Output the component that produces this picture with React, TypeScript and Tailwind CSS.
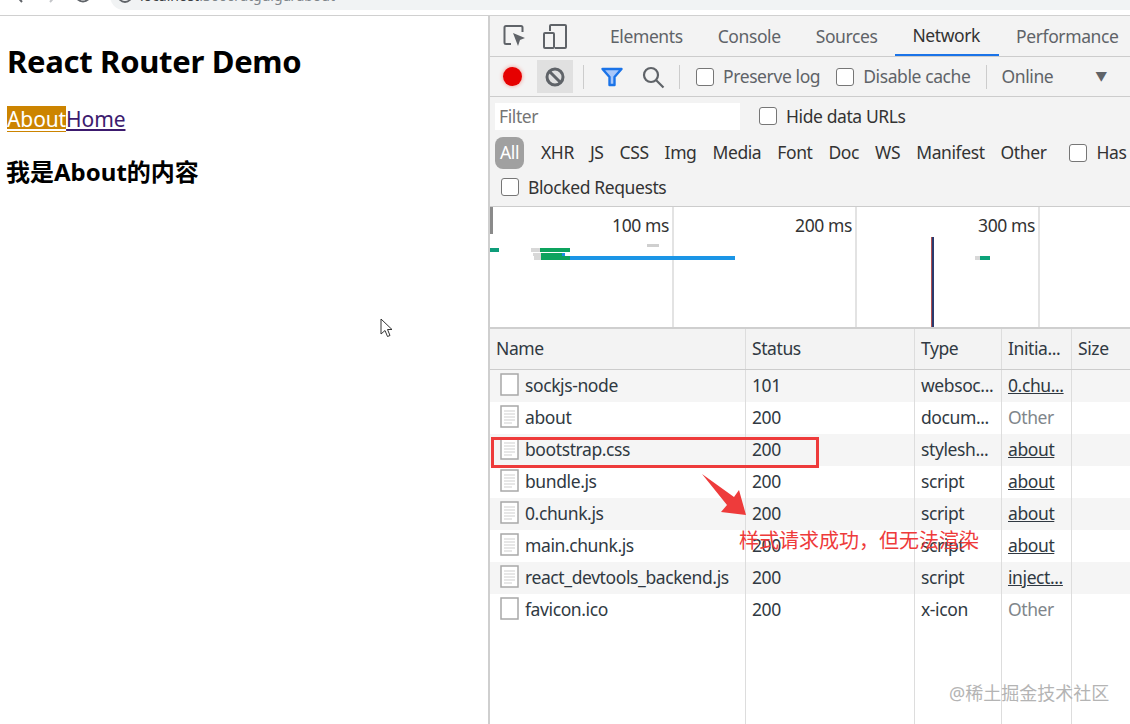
const tabs = ["Elements", "Console", "Sources", "Network", "Performance"];
const types = ["XHR", "JS", "CSS", "Img", "Media", "Font", "Doc", "WS", "Manifest", "Other"];

const rows = [
  { name: "sockjs-node", status: "101", type: "websoc...", initiator: "0.chu...", link: true, blank: true },
  { name: "about", status: "200", type: "docum...", initiator: "Other", link: false, blank: false },
  { name: "bootstrap.css", status: "200", type: "stylesh...", initiator: "about", link: true, blank: false },
  { name: "bundle.js", status: "200", type: "script", initiator: "about", link: true, blank: false },
  { name: "0.chunk.js", status: "200", type: "script", initiator: "about", link: true, blank: false },
  { name: "main.chunk.js", status: "200", type: "script", initiator: "about", link: true, blank: false },
  { name: "react_devtools_backend.js", status: "200", type: "script", initiator: "inject...", link: true, blank: false },
  { name: "favicon.ico", status: "200", type: "x-icon", initiator: "Other", link: false, blank: true },
];

function Check({ label, className = "" }: { label: string; className?: string }) {
  return (
    <label className={`flex items-center gap-[9px] ${className}`}>
      <span className="w-[18px] h-[18px] rounded-[3px] border border-[#767676] bg-white shrink-0" />
      <span>{label}</span>
    </label>
  );
}

function FileIcon({ blank }: { blank: boolean }) {
  return (
    <svg width="20" height="24" viewBox="0 0 20 24" className="shrink-0">
      <rect x="1" y="1" width="17" height="21" fill="#fff" stroke="#a8a8a8" strokeWidth="1.5" />
      {!blank && <path d="M4 6h11M4 9h11M4 12h11M4 15h11M4 18h8" stroke="#cfcfcf" strokeWidth="1.2" />}
    </svg>
  );
}

export default function App() {
  return (
    <div className="relative w-[1130px] h-[724px] overflow-hidden bg-white text-[#303942] font-['Noto_Sans','Noto_Sans_CJK_SC',sans-serif]">
      {/* browser chrome, cut off by the crop */}
      <div className="h-[16px] border-b border-[#d0d0d0] flex items-end overflow-hidden bg-white">
        <div className="flex items-center h-[24px] shrink-0 mb-[9px]">
          <svg width="14" height="20" viewBox="0 0 14 20" fill="none" stroke="#5f6368" strokeWidth="2" className="ml-[11px]"><path d="M11 2l-7 8 7 8" /></svg>
          <svg width="14" height="20" viewBox="0 0 14 20" fill="none" stroke="#c4c6c9" strokeWidth="2" className="ml-[22px]"><path d="M3 2l7 8-7 8" /></svg>
          <svg width="20" height="20" viewBox="0 0 20 20" fill="none" stroke="#5f6368" strokeWidth="2" className="ml-[12px]"><circle cx="10" cy="10" r="7.5" /></svg>
        </div>
        <div className="ml-[17px] w-[1020px] h-[30px] mb-[5px] rounded-l-[14px] bg-[#f1f3f4] flex items-center pl-[6px] gap-[6px] text-[14px] text-[#3c4043] shrink-0">
          <svg width="18" height="18" viewBox="0 0 18 18" fill="none" stroke="#5f6368" strokeWidth="1.8"><circle cx="9" cy="9" r="7" /></svg>
          <span>localhost<span className="text-[#80868b]">:3000/atguigu/about</span></span>
        </div>
      </div>

      <div className="flex h-[708px]">
        {/* page */}
        <main className="w-[488px] shrink-0 text-black pl-[8px]">
          <h1 className="text-[31px] leading-[44px] font-bold tracking-[-0.3px] mt-[23px] -ml-[1px]">React Router Demo</h1>
          <div className="flex text-[21px] leading-[26px] tracking-[-0.1px] mt-[23px] -ml-[1px]">
            <a className="underline bg-[#cc8400] text-white">About</a>
            <a className="underline text-[#3c1a6e]">Home</a>
          </div>
          <h3 className="text-[24px] leading-[32px] font-bold mt-[24px] -ml-[2px]">我是About的内容</h3>
        </main>

        {/* devtools */}
        <section className="flex-1 min-w-0 flex flex-col border-l-2 border-[#cfcfcf] text-[17.5px] tracking-[-0.4px] whitespace-nowrap">
          <div className="h-[41px] shrink-0 flex items-center border-b border-[#cccccc] bg-[#f3f3f3]">
            <svg width="26" height="26" viewBox="0 0 26 26" fill="none" className="ml-[12px] shrink-0">
              <path d="M9 21H4a1.5 1.5 0 0 1-1.5-1.5v-15A1.5 1.5 0 0 1 4 3h15a1.5 1.5 0 0 1 1.5 1.5V9" stroke="#5f6368" strokeWidth="2" />
              <path d="M11 10l12 5-5 2-2 6z" fill="#5f6368" />
            </svg>
            <svg width="26" height="26" viewBox="0 0 26 26" fill="none" className="ml-[14px] shrink-0">
              <path d="M8 8V3a1 1 0 0 1 1-1h14a1 1 0 0 1 1 1v21a1 1 0 0 1-1 1H13" stroke="#5f6368" strokeWidth="2" />
              <rect x="2" y="10" width="10" height="15" rx="1" stroke="#5f6368" strokeWidth="2" />
            </svg>
            <div className="w-px h-[24px] bg-[#cccccc] ml-[15px] mr-[10px]" />
            <div className="flex h-full">
              {tabs.map((tab) => (
                <div
                  key={tab}
                  className={`h-full flex items-center ${tab === "Network" ? "pl-[17px] pr-[19px] text-[#333333] border-b-2 border-[#1a73e8]" : "px-[17px] mr-[1px] text-[#5f6368]"}`}
                >
                  {tab}
                </div>
              ))}
            </div>
          </div>

          <div className="h-[40px] shrink-0 flex items-center border-b border-[#cccccc] bg-[#f3f3f3] text-[#5f6368]">
            <span className="w-[19px] h-[19px] rounded-full bg-[#e60000] ml-[13px] shadow-[0_0_4px_#f08a80] shrink-0" />
            <div className="w-[36px] h-[33px] ml-[15px] bg-[#e0e0e0] flex items-center justify-center shrink-0">
              <svg width="22" height="22" viewBox="0 0 22 22" fill="none" stroke="#5f6368" strokeWidth="3"><circle cx="11" cy="11" r="8" /><path d="M5.5 5.5l11 11" /></svg>
            </div>
            <div className="w-px h-[24px] bg-[#cccccc] ml-[10px] mr-[16px]" />
            <svg width="24" height="22" viewBox="0 0 24 22" fill="none" className="shrink-0">
              <path d="M2.5 3h19l-7 8v8h-5v-8z" stroke="#1a73e8" strokeWidth="2.4" strokeLinejoin="round" fill="#a8c7fa" />
            </svg>
            <svg width="24" height="24" viewBox="0 0 24 24" fill="none" stroke="#5f6368" strokeWidth="2.2" className="ml-[17px] shrink-0"><circle cx="10" cy="10" r="7" /><path d="M15 15l7.5 7.5" /></svg>
            <div className="w-px h-[24px] bg-[#cccccc] ml-[14px] mr-[16px]" />
            <Check label="Preserve log" />
            <Check label="Disable cache" className="ml-[16px]" />
            <div className="w-px h-[24px] bg-[#cccccc] ml-[15px] mr-[15px]" />
            <span>Online</span>
            <span className="ml-[42px] text-[#5f6368] text-[12px]">▼</span>
          </div>

          <div className="h-[110px] shrink-0 bg-[#f3f3f3] border-b border-[#cccccc] text-[#333333] px-[5px]">
            <div className="flex items-center h-[38px]">
              <div className="w-[245px] h-[27px] bg-white text-[#757575] flex items-center pl-[4px]">Filter</div>
              <Check label="Hide data URLs" className="ml-[19px]" />
            </div>
            <div className="flex items-center h-[35px]">
              <span className="w-[29px] h-[32px] rounded-[8px] bg-[#a0a0a0] text-white flex items-center justify-center shrink-0">All</span>
              <span className="w-px h-[24px] bg-[#cccccc] ml-[6px] mr-[4px]" />
              {types.map((t) => (
                <span key={t} className="px-[7px] mr-[2px]">{t}</span>
              ))}
              <Check label="Has" className="ml-[14px]" />
            </div>
            <div className="flex items-center h-[34px] pl-[6px]">
              <Check label="Blocked Requests" />
            </div>
          </div>

          {/* overview */}
          <div className="h-[122px] shrink-0 relative flex pl-[1px] border-b-2 border-[#cfcfcf] text-[#333333]">
            {["100 ms", "200 ms", "300 ms"].map((label) => (
              <div key={label} className="w-[183px] shrink-0 border-r-2 border-[#e3e3e3] text-right pr-[3px] pt-[4px] leading-[29px]">{label}</div>
            ))}
            <svg width="640" height="120" className="absolute left-0 top-0">
              <rect x="0" y="0" width="3" height="27" fill="#8a8a8a" />
              <rect x="0" y="41" width="9" height="4" fill="#0f9d7a" />
              <rect x="41" y="41" width="9" height="4" fill="#d8d8d8" />
              <rect x="50" y="41" width="30" height="4" fill="#0da35e" />
              <rect x="43" y="46" width="8" height="3" fill="#d8d8d8" />
              <rect x="51" y="46" width="21" height="3" fill="#0da35e" />
              <rect x="72" y="46" width="3" height="3" fill="#1b8fe0" />
              <rect x="44" y="49" width="7" height="4" fill="#d8d8d8" />
              <rect x="51" y="49" width="29" height="4" fill="#0da35e" />
              <rect x="80" y="49" width="165" height="4" fill="#1b95e6" />
              <rect x="157" y="37" width="12" height="3" fill="#cfcfcf" />
              <rect x="441" y="30" width="1" height="90" fill="#b05050" />
              <rect x="442" y="30" width="2" height="90" fill="#2a3a6e" />
              <rect x="485" y="49" width="5" height="4" fill="#d8d8d8" />
              <rect x="490" y="49" width="10" height="4" fill="#0da37a" />
            </svg>
          </div>

          {/* request table */}
          <div className="flex-1 min-h-0 flex flex-col text-[#303942]">
            <div className="h-[41px] shrink-0 flex items-center bg-[#f3f3f3] border-b border-[#cccccc]">
              <div className="w-[256px] h-full flex items-center pl-[6px] pb-[2px] border-r border-[#dddddd]">Name</div>
              <div className="w-[169px] h-full flex items-center pl-[6px] pb-[2px] border-r border-[#dddddd]">Status</div>
              <div className="w-[87px] h-full flex items-center pl-[6px] pb-[2px] border-r border-[#dddddd]">Type</div>
              <div className="w-[70px] h-full flex items-center pl-[6px] pb-[2px] border-r border-[#dddddd]">Initia...</div>
              <div className="flex-1 pl-[6px] pb-[2px]">Size</div>
            </div>
            {rows.map((row, i) => (
              <div key={row.name} className={`h-[32px] shrink-0 flex items-center ${i % 2 === 0 ? "bg-[#f5f5f5]" : "bg-white"}`}>
                <div className="w-[256px] h-full flex items-center gap-[5px] pl-[10px] pb-[2px] border-r border-[#dddddd]">
                  <FileIcon blank={row.blank} />
                  <span>{row.name}</span>
                </div>
                <div className="w-[169px] h-full flex items-center pl-[6px] pb-[2px] border-r border-[#dddddd]">{row.status}</div>
                <div className="w-[87px] h-full flex items-center pl-[6px] pb-[2px] border-r border-[#dddddd]">{row.type}</div>
                <div className={`w-[70px] h-full flex items-center pl-[6px] pb-[2px] border-r border-[#dddddd] ${row.link ? "underline" : "text-[#80868b]"}`}>{row.initiator}</div>
                <div className="flex-1" />
              </div>
            ))}
            <div className="flex-1 flex">
              <div className="w-[256px] border-r border-[#dddddd]" />
              <div className="w-[169px] border-r border-[#dddddd]" />
              <div className="w-[87px] border-r border-[#dddddd]" />
              <div className="w-[70px] border-r border-[#dddddd]" />
            </div>
          </div>
        </section>
      </div>

      {/* annotations drawn on top of the screenshot */}
      <div className="absolute left-[491px] top-[437px] w-[328px] h-[31px] border-[3px] border-[#ee3b3b]" />
      <svg width="50" height="44" viewBox="0 0 50 44" className="absolute left-[700px] top-[473px]">
        <path d="M2 1L34 24l5-7 7 25-25-3 6-7z" fill="#ee3b3b" />
      </svg>
      <div className="absolute left-[739px] top-[526px] text-[20px] leading-[30px] text-[#ee3b3b]">样式请求成功，但无法渲染</div>
      <div className="absolute left-[949px] top-[680px] text-[18px] leading-[26px] text-[#b4b4b4]">@稀土掘金技术社区</div>

      {/* mouse pointer */}
      <svg width="14" height="20" viewBox="0 0 14 20" className="absolute left-[380px] top-[318px]">
        <path d="M1 1v15l4-3.5 2.5 6 2.5-1-2.5-6H12z" fill="#fff" stroke="#333333" strokeWidth="1" />
      </svg>
    </div>
  );
}
